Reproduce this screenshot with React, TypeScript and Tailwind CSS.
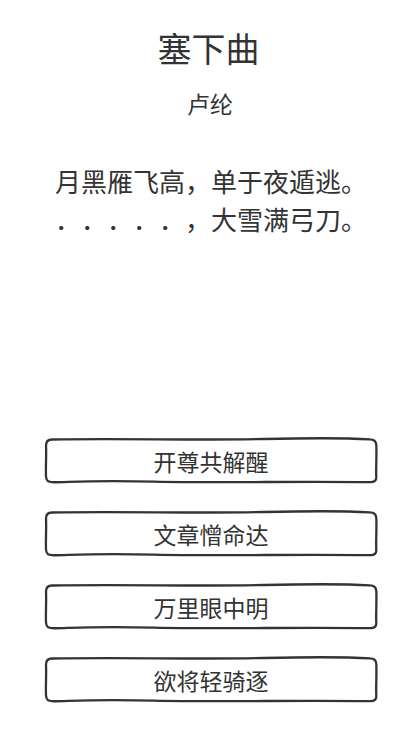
import React from "react";

const answers = ["开尊共解醒", "文章憎命达", "万里眼中明", "欲将轻骑逐"];

// hand-drawn looking outline that sits over each option button
const SketchBorder = () => (
  <svg
    className="pointer-events-none absolute inset-0 h-full w-full"
    viewBox="0 0 334 47"
    preserveAspectRatio="none"
    fill="none"
  >
    <path
      d="M8 2.5 C 80 1, 150 3.6, 220 2 S 310 1.4, 326 2.4 Q 332 2.6 332.3 8 C 332.8 20, 331.8 32, 332.3 40 Q 332.4 45 326.5 45.2 C 250 44, 180 46.2, 110 44.6 S 22 45.6, 8 45.2 Q 2.3 45.2 2 39.5 C 1.6 30, 2.5 18, 2 8.5 Q 2 2.6 8 2.5 Z"
      stroke="#333"
      strokeWidth="2.3"
      strokeLinejoin="round"
    />
  </svg>
);

const App = () => {
  return (
    <div className="flex h-[739px] flex-col items-center bg-white font-['Noto_Sans_CJK_SC','Noto_Sans',sans-serif] text-[#333] [text-spacing-trim:space-all]">
      <h1 className="pt-[28px] text-[34px] font-normal leading-[40px]">塞下曲</h1>
      <div className="mt-[20px] pl-[3px] text-[23px] leading-[30px]">卢纶</div>

      <div className="mt-[44px] pl-[5px] text-[26px] leading-[38px]">
        <p>月黑雁飞高，单于夜遁逃。</p>
        <p>
          {/* blanked half-line: one dot per missing character */}
          {[0, 1, 2, 3, 4].map((i) => (
            <span key={i} className="inline-block w-[26px]">
              ．
            </span>
          ))}
          <span className="inline-block w-[26px]">，</span>
          大雪满弓刀。
        </p>
      </div>

      <div className="mt-auto flex flex-col gap-[26px] self-stretch pb-[36px] pl-[44px]">
        {answers.map((item) => (
          <button
            key={item}
            className="relative flex h-[47px] w-[334px] items-center justify-center bg-white text-[23px] leading-none text-[#333]"
          >
            <SketchBorder />
            <span className="pt-[1px]">{item}</span>
          </button>
        ))}
      </div>
    </div>
  );
};

export default App;
